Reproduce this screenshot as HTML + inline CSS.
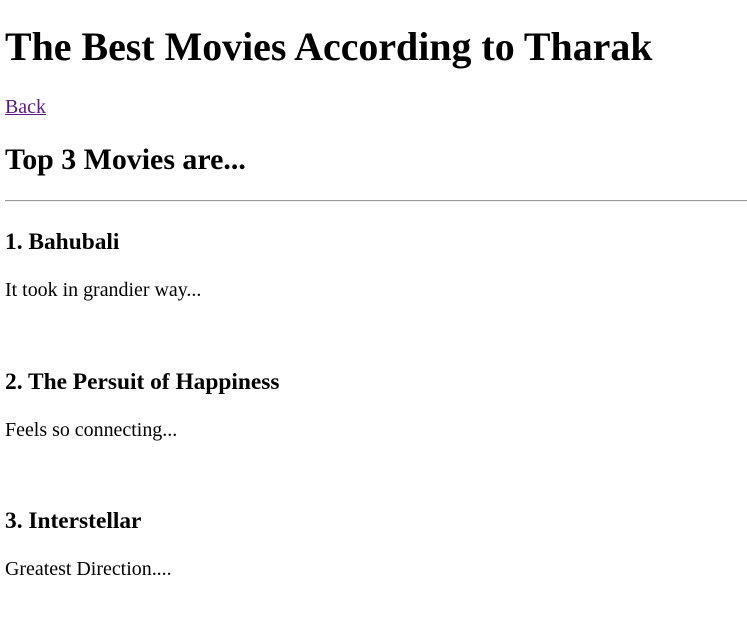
<!DOCTYPE html>
<html><head><meta charset="utf-8"><style>
body{margin:0;width:747px;height:632px;background:#fff;font-family:"Liberation Serif",serif;color:#000;position:relative;overflow:hidden}
.t{position:absolute;left:5px;line-height:1;white-space:nowrap;margin:0}
h1.t{font-size:39.9px;font-weight:bold}
h2.t{font-size:29.9px;font-weight:bold}
h3.t{font-size:23.4px;font-weight:bold}
p.t{font-size:19.95px}
a{color:#551a8b;text-decoration:underline}
hr{position:absolute;left:5px;right:0;top:200px;margin:0;border:0;border-top:1px solid #9a9a9a;border-bottom:1px solid #eee}
</style></head><body>
<h1 class="t" style="top:27px">The Best Movies According to Tharak</h1>
<p class="t" style="top:98px"><a href="#">Back</a></p>
<h2 class="t" style="top:145px">Top 3 Movies are...</h2>
<hr>
<h3 class="t" style="top:231px">1. Bahubali</h3>
<p class="t" style="top:281px">It took in grandier way...</p>
<h3 class="t" style="top:371px">2. The Persuit of Happiness</h3>
<p class="t" style="top:421px">Feels so connecting...</p>
<h3 class="t" style="top:510px">3. Interstellar</h3>
<p class="t" style="top:560px">Greatest Direction....</p>
</body></html>
